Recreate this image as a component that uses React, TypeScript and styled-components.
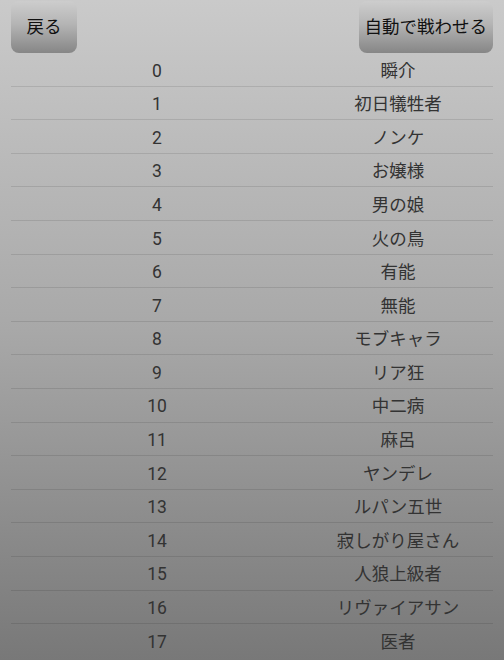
import React from 'react';
import styled, { createGlobalStyle } from 'styled-components';

const GlobalStyle = createGlobalStyle`
  html, body {
    margin: 0;
    padding: 0;
  }
  body {
    font-family: Roboto, 'Noto Sans CJK JP', sans-serif;
  }
`;

const Screen = styled.div`
  width: 504px;
  height: 660px;
  overflow: hidden;
  background: linear-gradient(to bottom, #cacaca 0%, #a8a8a8 50%, #787878 100%);
  padding: 0 11px;
  box-sizing: border-box;
`;

const Header = styled.div`
  display: flex;
  justify-content: space-between;
  align-items: flex-start;
  height: 53px;
  padding-top: 1px;
  box-sizing: border-box;
`;

const Button = styled.button`
  height: 52px;
  padding: 0 6px;
  min-width: 66px;
  border: none;
  border-radius: 8px;
  background: linear-gradient(to bottom, #cdcdcd 0%, #b4b4b4 45%, #868686 100%);
  color: #111;
  font-family: Roboto, 'Noto Sans CJK JP', sans-serif;
  font-size: 17.5px;
  line-height: 1;
  padding-top: 2px;
  cursor: pointer;
`;

const Table = styled.div`
  display: flex;
  flex-direction: column;
`;

const Row = styled.div<{ $last?: boolean }>`
  display: grid;
  grid-template-columns: 292px 1fr;
  align-items: center;
  height: 33.6px;
  box-sizing: border-box;
  border-bottom: 1px solid ${(p) => (p.$last ? 'transparent' : 'rgba(0, 0, 0, 0.1)')};
  color: #333;
  font-size: 17.5px;
`;

const Cell = styled.div`
  text-align: center;
  line-height: 1;
  padding-top: 4px;
`;

const players = [
  '瞬介',
  '初日犠牲者',
  'ノンケ',
  'お嬢様',
  '男の娘',
  '火の鳥',
  '有能',
  '無能',
  'モブキャラ',
  'リア狂',
  '中二病',
  '麻呂',
  'ヤンデレ',
  'ルパン五世',
  '寂しがり屋さん',
  '人狼上級者',
  'リヴァイアサン',
  '医者',
];

const App = () => (
  <>
    <GlobalStyle />
    <Screen>
      <Header>
        <Button>戻る</Button>
        <Button>自動で戦わせる</Button>
      </Header>
      <Table>
        {players.map((name, i) => (
          <Row key={i} $last={i === players.length - 1}>
            <Cell>{i}</Cell>
            <Cell>{name}</Cell>
          </Row>
        ))}
      </Table>
    </Screen>
  </>
);

export default App;
